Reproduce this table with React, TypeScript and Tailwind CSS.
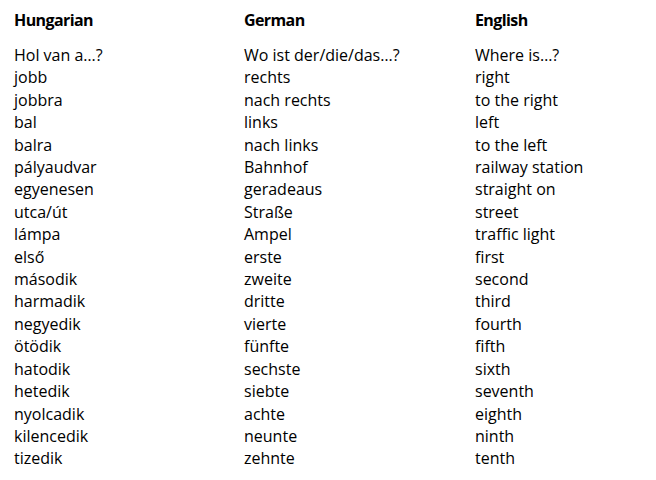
const rows: [string, string, string][] = [
  ['Hol van a…?', 'Wo ist der/die/das…?', 'Where is…?'],
  ['jobb', 'rechts', 'right'],
  ['jobbra', 'nach rechts', 'to the right'],
  ['bal', 'links', 'left'],
  ['balra', 'nach links', 'to the left'],
  ['pályaudvar', 'Bahnhof', 'railway station'],
  ['egyenesen', 'geradeaus', 'straight on'],
  ['utca/út', 'Straße', 'street'],
  ['lámpa', 'Ampel', 'traffic light'],
  ['első', 'erste', 'first'],
  ['második', 'zweite', 'second'],
  ['harmadik', 'dritte', 'third'],
  ['negyedik', 'vierte', 'fourth'],
  ['ötödik', 'fünfte', 'fifth'],
  ['hatodik', 'sechste', 'sixth'],
  ['hetedik', 'siebte', 'seventh'],
  ['nyolcadik', 'achte', 'eighth'],
  ['kilencedik', 'neunte', 'ninth'],
  ['tizedik', 'zehnte', 'tenth'],
];

const App = () => {
  return (
    <div className="w-[656px] h-[480px] bg-white text-black font-['Open_Sans','Liberation_Sans',sans-serif] text-[16px] leading-[22.4px] pl-[14px] pt-[9px]">
      <div className="grid grid-cols-[230px_231px_1fr] font-bold tracking-[-0.6px] mb-[12.6px]">
        <div>Hungarian</div>
        <div>German</div>
        <div>English</div>
      </div>
      {rows.map(([hu, de, en]) => (
        <div key={hu} className="grid grid-cols-[230px_231px_1fr]">
          <div>{hu}</div>
          <div>{de}</div>
          <div>{en}</div>
        </div>
      ))}
    </div>
  );
};

export default App;
